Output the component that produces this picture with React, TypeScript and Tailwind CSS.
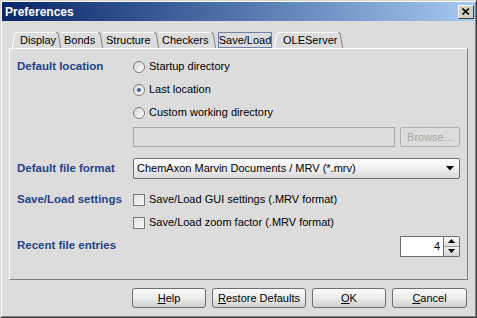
import React from 'react';

const font = { fontFamily: '"Liberation Sans", Arial, sans-serif' };

const Radio: React.FC<{ checked?: boolean; label: string }> = ({ checked, label }) => (
  <div className="flex items-center gap-[4px] h-[23px]">
    <div className="w-[12px] h-[12px] rounded-full border border-[#7b7b7b] bg-gradient-to-br from-[#d6d6d6] to-[#ffffff] flex items-center justify-center">
      {checked && <div className="w-[4px] h-[4px] rounded-full bg-[#3f5da3]" />}
    </div>
    <span className="text-[11px] text-black">{label}</span>
  </div>
);

const Check: React.FC<{ label: string }> = ({ label }) => (
  <div className="flex items-center gap-[4px] h-[23px]">
    <div className="w-[12px] h-[12px] border border-[#7b7b7b] bg-gradient-to-br from-[#e2e2e2] to-[#f8f8f8]" />
    <span className="text-[11px] text-black">{label}</span>
  </div>
);

const Label: React.FC<{ children: React.ReactNode }> = ({ children }) => (
  <div className="w-[116px] shrink-0 text-[11.5px] font-bold text-[#23428a]">{children}</div>
);

const TabEdge: React.FC = () => (
  <svg width="5" height="16" className="shrink-0">
    <path d="M0 0.5 Q2.5 0.5 2.5 3 L4.5 16" fill="none" stroke="#808080" strokeWidth="1" />
  </svg>
);

const TabLeft: React.FC = () => (
  <svg width="5" height="16" className="shrink-0">
    <path d="M0.5 16 L2.5 3 Q3 0.5 5 0.5" fill="none" stroke="#ffffff" strokeWidth="1" />
  </svg>
);

const Tab: React.FC<{ label: string; w: string; first?: boolean }> = ({ label, w, first }) => (
  <div className={`flex items-stretch h-[16px] ${w}`}>
    {first && <TabLeft />}
    <div className="flex-1 border-t border-white flex items-center pl-[3px] text-[11px] text-black">
      {label}
    </div>
    <TabEdge />
  </div>
);

const Btn: React.FC<{ w: string; children: React.ReactNode }> = ({ w, children }) => (
  <div
    className={`${w} h-[20px] rounded-[3px] border border-[#6f6f6f] bg-gradient-to-b from-[#fbfbfb] via-[#ececec] to-[#cfcfcf] flex items-center justify-center text-[11px] text-black`}
  >
    {children}
  </div>
);

export default function App() {
  return (
    <div style={font} className="w-[477px] h-[318px] border border-t-[#d4d4d4] border-l-[#d4d4d4] border-r-[#404040] border-b-[#404040] bg-[#dcdcdc]">
      <div className="h-full border border-t-white border-l-white border-r-[#808080] border-b-[#808080] flex flex-col">
        {/* title bar */}
        <div className="h-[19px] bg-gradient-to-r from-[#0a246a] to-[#a6caf0] flex items-center justify-between pl-[3px] pr-[1px]">
          <span className="text-[12px] font-bold text-white">Preferences</span>
          <div className="w-[16px] h-[14px] bg-[#d4d0c8] border border-t-white border-l-white border-r-[#404040] border-b-[#404040] flex items-center justify-center">
            <svg width="8" height="7" viewBox="0 0 8 7">
              <path d="M0.5 0.5 L7 6.5 M7 0.5 L0.5 6.5" stroke="#000" strokeWidth="1.6" />
            </svg>
          </div>
        </div>

        {/* tabs */}
        <div className="mt-[11px] pl-[10px] flex items-end h-[16px]">
          <Tab label="Display" w="w-[49px]" first />
          <Tab label="Bonds" w="w-[42px]" />
          <Tab label="Structure" w="w-[56px]" />
          <Tab label="Checkers" w="w-[57px]" />
          <div className="w-[58px] h-[16px] flex items-center pl-[2px]">
            <div className="h-[16px] w-[54px] border border-[#6f7fae] flex items-center justify-center text-[11px] text-black">
              Save/Load
            </div>
          </div>
          <div className="flex items-stretch h-[16px] w-[69px]">
            <TabLeft />
            <div className="flex-1 border-t border-white flex items-center pl-[4px] text-[11px] text-black">
              OLEServer
            </div>
            <TabEdge />
          </div>
        </div>

        {/* panel */}
        <div className="mx-[7px] h-[232px] border border-t-white border-l-white border-r-[#808080] border-b-[#808080] pt-[6px] pl-[7px] pr-[7px] flex flex-col">
          <div className="flex items-center h-[23px]">
            <Label>Default location</Label>
            <Radio label="Startup directory" />
          </div>
          <div className="pl-[116px]">
            <Radio checked label="Last location" />
            <Radio label="Custom working directory" />
          </div>
          <div className="pl-[116px] h-[26px] flex items-center gap-[5px]">
            <div className="flex-1 h-[20px] border border-[#a6a6a6] bg-[#dcdcdc]" />
            <div className="w-[60px] h-[20px] rounded-[2px] border border-[#b0b0b0] flex items-center justify-center text-[11px] text-[#a6a6a6]">
              Browse...
            </div>
          </div>

          <div className="mt-[8px] flex items-center h-[21px]">
            <Label>Default file format</Label>
            <div className="flex-1 h-[21px] rounded-[2px] border border-[#6f6f6f] bg-gradient-to-b from-[#fdfdfd] via-[#f0f0f0] to-[#d8d8d8] flex items-center justify-between pl-[3px] pr-[5px] text-[11px] text-black">
              <span>ChemAxon Marvin Documents / MRV (*.mrv)</span>
              <svg width="8" height="5" viewBox="0 0 8 5">
                <path d="M0 0 L8 0 L4 4.5 Z" fill="#000" />
              </svg>
            </div>
          </div>

          <div className="mt-[9px] flex items-center h-[23px]">
            <Label>Save/Load settings</Label>
            <Check label="Save/Load GUI settings (.MRV format)" />
          </div>
          <div className="pl-[116px]">
            <Check label="Save/Load zoom factor (.MRV format)" />
          </div>

          <div className="mt-[2px] flex items-center h-[20px]">
            <Label>Recent file entries</Label>
            <div className="flex-1" />
            <div className="flex h-[21px]">
              <div className="w-[44px] h-[21px] border border-[#6f6f6f] bg-white flex items-center justify-end pr-[3px] text-[11px] text-black">
                4
              </div>
              <div className="w-[16px] h-[21px] flex flex-col border border-l-0 border-[#6f6f6f] rounded-r-[2px]">
                <div className="flex-1 border-b border-[#9a9a9a] bg-gradient-to-b from-[#fafafa] to-[#dedede] flex items-center justify-center">
                  <svg width="7" height="4" viewBox="0 0 7 4">
                    <path d="M0 4 L7 4 L3.5 0 Z" fill="#000" />
                  </svg>
                </div>
                <div className="flex-1 bg-gradient-to-b from-[#f2f2f2] to-[#d4d4d4] flex items-center justify-center">
                  <svg width="7" height="4" viewBox="0 0 7 4">
                    <path d="M0 0 L7 0 L3.5 4 Z" fill="#000" />
                  </svg>
                </div>
              </div>
            </div>
          </div>
        </div>

        {/* buttons */}
        <div className="mt-[8px] pl-[130px] flex gap-[6px]">
          <Btn w="w-[74px]"><span><span className="underline">H</span>elp</span></Btn>
          <Btn w="w-[94px]"><span><span className="underline">R</span>estore Defaults</span></Btn>
          <Btn w="w-[74px]"><span><span className="underline">O</span>K</span></Btn>
          <Btn w="w-[75px]"><span><span className="underline">C</span>ancel</span></Btn>
        </div>
      </div>
    </div>
  );
}
